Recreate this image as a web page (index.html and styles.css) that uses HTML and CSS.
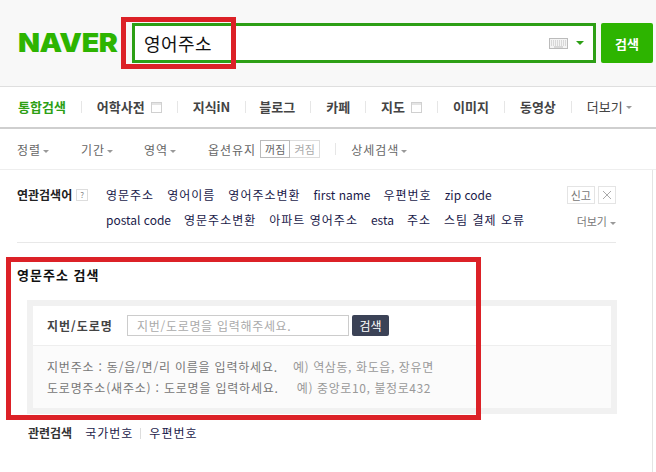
FILE: index.html
```html
<!DOCTYPE html>
<html lang="ko">
<head>
  <meta charset="UTF-8">
  <meta name="viewport" content="width=device-width, initial-scale=1.0">
  <title>영어주소 : 네이버 통합검색</title>
  <link rel="stylesheet" href="styles.css">
</head>
<body>
  <header class="header">
    <div class="logo">NAVER</div>
    <div class="search-box">
      <span class="search-text">영어주소</span>
      <svg class="keyboard" width="19" height="11" viewBox="0 0 19 11">
        <rect x="0.5" y="0.5" width="18" height="10" fill="#f4f4f4" stroke="#bbb"/>
        <path d="M2 3h15M2 5h15M2 7h15" stroke="#bbb" stroke-dasharray="1 1"/>
        <path d="M5 9h9" stroke="#bbb"/>
      </svg>
      <span class="search-arrow"></span>
    </div>
    <button class="search-btn">검색</button>
  </header>

  <nav class="tabs">
    <a class="tab tab-on">통합검색</a>
    <a class="tab">어학사전<span class="popup-icon"></span></a>
    <a class="tab tab-in">지식iN</a>
    <a class="tab">블로그</a>
    <a class="tab">카페</a>
    <a class="tab">지도<span class="popup-icon"></span></a>
    <a class="tab">이미지</a>
    <a class="tab">동영상</a>
    <a class="tab tab-more">더보기<span class="caret"></span></a>
  </nav>

  <div class="filters">
    <span class="filter f-sort">정렬<span class="caret"></span></span>
    <span class="filter f-period">기간<span class="caret"></span></span>
    <span class="filter f-area">영역<span class="caret"></span></span>
    <span class="filter f-keep">옵션유지</span>
    <span class="toggle"><span class="toggle-off">꺼짐</span><span class="toggle-on">켜짐</span></span>
    <span class="filter-sep"></span>
    <span class="filter">상세검색<span class="caret"></span></span>
  </div>

  <main class="content">
    <section class="related">
      <div class="related-title">연관검색어<span class="help">?</span></div>
      <div class="related-list">
        <div class="related-row">
          <a>영문주소</a><a>영어이름</a><a>영어주소변환</a><a class="latin">first name</a><a>우편번호</a><a class="latin">zip code</a>
        </div>
        <div class="related-row">
          <a class="latin">postal code</a><a>영문주소변환</a><a>아파트 영어주소</a><a class="latin">esta</a><a>주소</a><a>스팀 결제 오류</a>
        </div>
      </div>
      <div class="related-side">
        <div class="side-btns"><span class="side-btn">신고</span><span class="side-btn side-x">
          <svg width="10" height="10" viewBox="0 0 10 10"><path d="M1 1l8 8M9 1l-8 8" stroke="#aaa" fill="none"/></svg>
        </span></div>
        <div class="side-more">더보기<span class="caret"></span></div>
      </div>
    </section>

    <section class="address">
      <h2 class="address-title">영문주소 검색</h2>
      <div class="panel">
        <div class="panel-top">
          <label class="panel-label">지번/도로명</label>
          <div class="panel-input">지번/도로명을 입력해주세요.</div>
          <button class="panel-btn">검색</button>
        </div>
        <div class="panel-help">
          <p>지번주소 : 동/읍/면/리 이름을 입력하세요.<span class="example ex-1">예) 역삼동, 화도읍, 장유면</span></p>
          <p>도로명주소(새주소) : 도로명을 입력하세요.<span class="example ex-2">예) 중앙로10, 불정로432</span></p>
        </div>
      </div>
      <div class="also">
        <strong>관련검색</strong><a>국가번호</a><span class="also-sep"></span><a>우편번호</a>
      </div>
    </section>
  </main>

  <div class="mark mark-search"></div>
  <div class="mark mark-section"></div>
</body>
</html>
```

FILE: styles.css
```css
html, body {
  margin: 0;
  padding: 0;
}
body {
  width: 656px;
  height: 472px;
  overflow: hidden;
  position: relative;
  background-color: #ffffff;
  font-family: "Noto Sans CJK KR", "Liberation Sans", sans-serif;
  font-size: 12px;
  color: #333;
}
a {
  color: inherit;
  text-decoration: none;
}
p, h2 {
  margin: 0;
}

/* header */
.header {
  height: 87px;
  box-sizing: border-box;
  padding: 23px 3px 0 18px;
  display: flex;
  align-items: flex-start;
  background-color: #f8f8f8;
  border-bottom: 1px solid #dfdfdf;
}
.logo {
  width: 114px;
  height: 40px;
  line-height: 40px;
  font-family: Inter, "Liberation Sans", sans-serif;
  font-size: 26px;
  font-weight: 900;
  letter-spacing: -0.4px;
  color: #2db400;
  transform: scaleX(1.1);
  transform-origin: left center;
}
.search-box {
  width: 464px;
  height: 40px;
  box-sizing: border-box;
  display: flex;
  align-items: center;
  padding: 0 9px 0 9px;
  background-color: #fff;
  border: 3px solid #2d9f15;
}
.search-text {
  flex: 1;
  font-size: 18px;
  letter-spacing: 0.4px;
  color: #111;
}
.keyboard {
  margin-right: 8px;
}
.search-arrow {
  width: 0;
  height: 0;
  border: 4px solid transparent;
  border-top: 4px solid #2d9f15;
  border-bottom: 0;
}
.search-btn {
  width: 52px;
  height: 40px;
  margin-left: 5px;
  padding: 0;
  border: none;
  border-radius: 2px;
  background-color: #2db400;
  color: #fff;
  font-family: inherit;
  font-size: 13px;
  font-weight: 700;
}

/* tabs */
.tabs {
  height: 42px;
  box-sizing: border-box;
  padding-left: 18px;
  display: flex;
  align-items: center;
  background-color: #fff;
  border-bottom: 2px solid #cfcfcf;
}
.tab {
  position: relative;
  font-size: 13px;
  font-weight: 700;
  line-height: 16px;
  color: #444;
  display: flex;
  align-items: center;
  margin-right: 31px;
}
.tab::after {
  content: "";
  position: absolute;
  right: -16px;
  top: 2px;
  width: 1px;
  height: 12px;
  background-color: #e6e6e6;
}
.tab-on {
  color: #2d9f15;
}
.tab-in {
  margin-right: 29px;
}
.tab-more {
  font-weight: 400;
  margin-right: 0;
}
.tab-more::after {
  display: none;
}
.popup-icon {
  width: 9px;
  height: 9px;
  margin-left: 6px;
  border: 1px solid #d0d0d0;
  box-shadow: inset 0 2px 0 #e4e4e4;
}
.caret {
  display: inline-block;
  width: 0;
  height: 0;
  margin-left: 3px;
  vertical-align: middle;
  border: 3px solid transparent;
  border-top: 3px solid #999;
  border-bottom: 0;
}

/* filters */
.filters {
  height: 41px;
  box-sizing: border-box;
  padding-left: 17px;
  display: flex;
  align-items: center;
  letter-spacing: 1px;
  color: #666;
  border-bottom: 1px solid #eee;
}
.filter .caret {
  margin-left: 2px;
}
.f-sort {
  width: 64px;
}
.f-period {
  width: 63px;
}
.f-area {
  width: 64px;
}
.f-keep {
  margin-right: 4px;
}
.toggle {
  display: flex;
  font-size: 11px;
  letter-spacing: 0;
  line-height: 16px;
}
.toggle-off {
  width: 28px;
  text-align: center;
  border: 1px solid #bbb;
  color: #666;
}
.toggle-on {
  width: 29px;
  text-align: center;
  border: 1px solid #ddd;
  border-left: 0;
  color: #aaa;
}
.filter-sep {
  width: 1px;
  height: 12px;
  margin: 0 15px 0 15px;
  background-color: #e6e6e6;
}

/* related keywords */
.content {
  margin-right: 3px;
  height: 302px;
  border-right: 1px solid #e4e4e4;
}
.related {
  position: relative;
  margin: 0 36px 0 17px;
  height: 73px;
  box-sizing: border-box;
  padding-top: 13px;
  display: flex;
  border-bottom: 1px solid #e8e8e8;
}
.related-title {
  width: 89px;
  height: 24px;
  line-height: 24px;
  font-weight: 700;
  color: #222;
  display: flex;
  align-items: center;
}
.help {
  width: 10px;
  height: 10px;
  margin-left: 4px;
  border: 1px solid #ddd;
  font-size: 8px;
  font-weight: 400;
  line-height: 10px;
  text-align: center;
  color: #888;
}
.related-row {
  height: 25px;
  line-height: 24px;
  display: flex;
  gap: 13px;
  letter-spacing: 1px;
  color: #1a1a4a;
}
.related-row .latin {
  letter-spacing: 0;
}
.related-side {
  position: absolute;
  right: 0;
  top: 16px;
}
.side-btns {
  display: flex;
  justify-content: flex-end;
  gap: 3px;
}
.side-btn {
  height: 16px;
  padding: 0 3px;
  border: 1px solid #e4e4e4;
  font-size: 11px;
  line-height: 16px;
  color: #777;
}
.side-x {
  width: 16px;
  padding: 0;
  display: flex;
  align-items: center;
  justify-content: center;
}
.side-more {
  margin-top: 9px;
  font-size: 11px;
  color: #777;
  text-align: right;
}

/* address search */
.address {
  padding: 23px 0 0 17px;
}
.address-title {
  font-size: 13px;
  font-weight: 700;
  letter-spacing: 1px;
  line-height: 18px;
  color: #111;
}
.panel {
  width: 578px;
  margin: 16px 0 0 10px;
  border: 6px solid #f1f1f1;
}
.panel-top {
  height: 39px;
  display: flex;
  align-items: center;
  padding-left: 14px;
  background-color: #fff;
  border-bottom: 1px solid #eee;
}
.panel-label {
  width: 80px;
  font-weight: 700;
  letter-spacing: 1px;
  color: #444;
}
.panel-input {
  width: 211px;
  height: 19px;
  line-height: 19px;
  padding-left: 9px;
  border: 1px solid #ccc;
  letter-spacing: 0.7px;
  color: #aaa;
}
.panel-btn {
  width: 37px;
  height: 21px;
  margin-left: 3px;
  padding: 0;
  border: none;
  border-radius: 2px;
  background-color: #3b4256;
  color: #fff;
  font-family: inherit;
  font-size: 12px;
}
.panel-help {
  height: 62px;
  box-sizing: border-box;
  padding: 10px 0 0 14px;
  background-color: #fbfbfb;
  line-height: 21px;
  letter-spacing: 0.8px;
  color: #777;
}
.example {
  letter-spacing: 0.6px;
  color: #999;
}
.ex-1 {
  margin-left: 15px;
}
.ex-2 {
  margin-left: 18px;
}
.also {
  margin: 10px 0 0 11px;
  display: flex;
  align-items: center;
  line-height: 18px;
  color: #1a1a4a;
}
.also a {
  letter-spacing: 1px;
}
.also strong {
  margin-right: 13px;
  color: #333;
}
.also-sep {
  width: 1px;
  height: 11px;
  margin: 0 8px 0 7px;
  background-color: #ddd;
}

/* red annotation boxes drawn over the screenshot */
.mark {
  position: absolute;
  box-sizing: border-box;
  border: 5px solid #dc2127;
}
.mark-search {
  left: 121px;
  top: 17px;
  width: 115px;
  height: 52px;
}
.mark-section {
  left: 6px;
  top: 257px;
  width: 475px;
  height: 163px;
}
```
